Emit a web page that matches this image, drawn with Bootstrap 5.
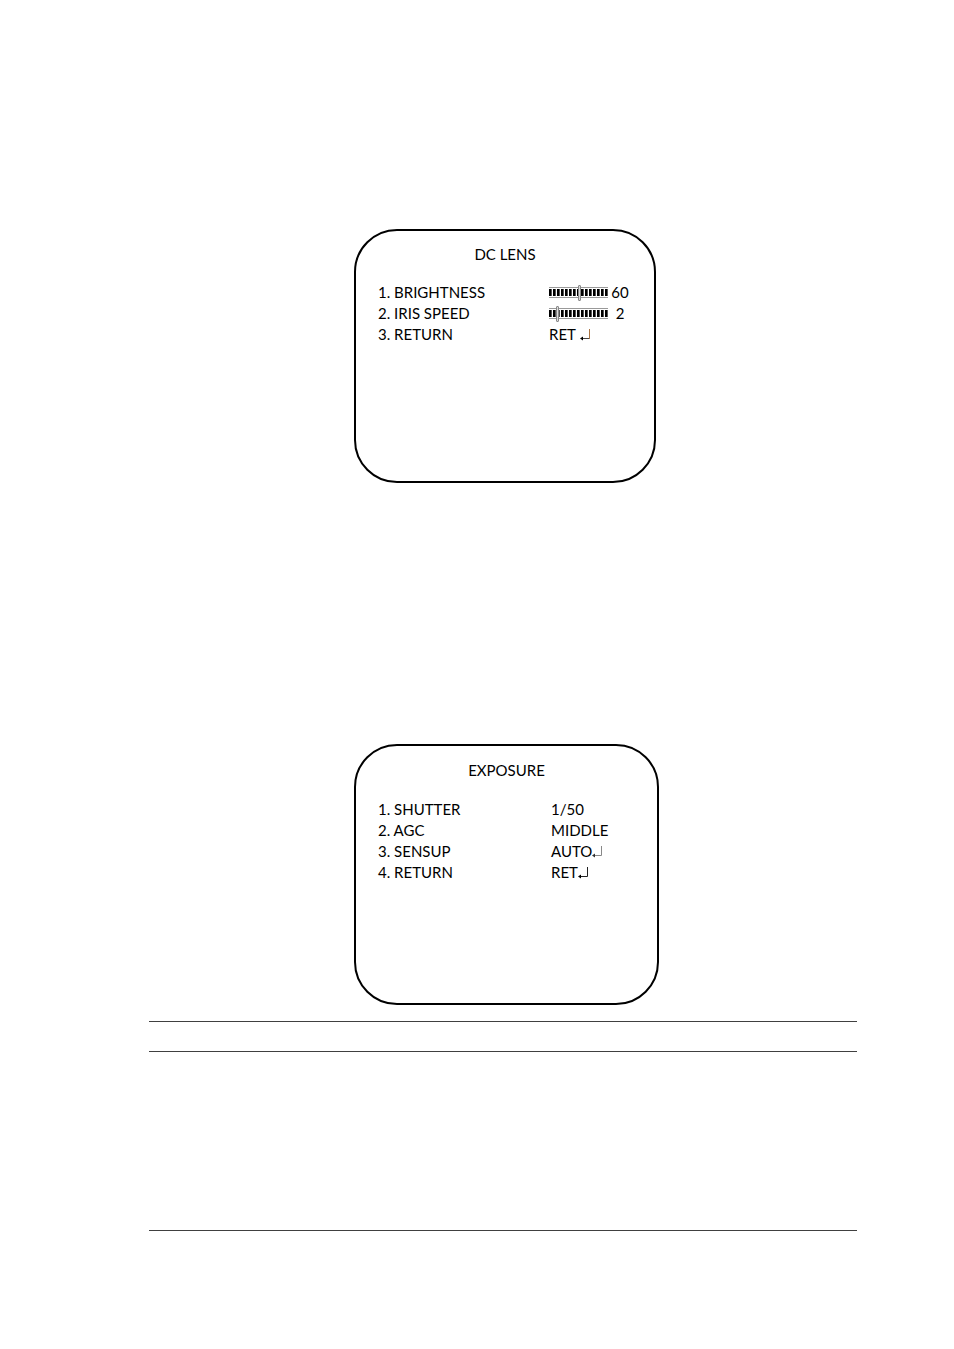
<!DOCTYPE html>
<html lang="en">
<head>
<meta charset="utf-8">
<meta name="viewport" content="width=device-width, initial-scale=1">
<title>DC Lens and Exposure menus</title>
<link href="https://cdn.jsdelivr.net/npm/bootstrap@5.3.0/dist/css/bootstrap.min.css" rel="stylesheet">
<style>
  body { background: #fff; color: #000; font-family: Lato, "Liberation Sans", sans-serif; font-size: 15px; line-height: 21px; }
  .manual { padding: 229px 97px 118px 149px; }
  .osd-row { padding-left: 205px; }
  .osd-second { margin-top: 261px; }
  .osd { border: 2px solid #000; border-radius: 43px; width: 302px; min-height: 254px; padding: 13px 22px; }
  .osd-large { width: 305px; min-height: 261px; padding-top: 14px; }
  .osd h2 { font-size: 15px; line-height: 21px; font-weight: 400; margin: 0 0 17px; }
  .osd-large h2 { margin-bottom: 18px; }
  .osd-name { width: 171px; flex: none; }
  .osd-large .osd-name { width: 173px; }
  .osd-button { background: none; border: 0; padding: 0; color: inherit; }
  .level { appearance: none; -webkit-appearance: none; width: 59px; height: 17px; margin: 0; flex: none;
    background:
      linear-gradient(#999, #999) 0 3px / 100% 1px no-repeat,
      linear-gradient(#999, #999) 0 13px / 100% 1px no-repeat,
      repeating-linear-gradient(90deg, #000 0 2px, #555 2px 3px, #fff 3px 4px) 0 5px / 59px 7px no-repeat; }
  .level::-webkit-slider-thumb { -webkit-appearance: none; width: 3px; height: 16px; border: 1px solid #888; border-radius: 1px; background: #ddd; }
  .level::-moz-range-thumb { width: 1px; height: 14px; border: 1px solid #888; border-radius: 1px; background: #ddd; }
  .level-value { width: 24px; }
  .ruled-head { height: 31px; border-top: 1px solid #404040; border-bottom: 1px solid #404040; }
  .ruled-body { height: 179px; border-bottom: 1px solid #404040; }
</style>
</head>
<body>
<main class="manual">
  <div class="osd-row">
    <section class="osd">
      <h2 class="text-center">DC LENS</h2>
      <div class="d-flex align-items-center"><label class="osd-name" for="brightness">1. BRIGHTNESS</label><input class="level" id="brightness" type="range" min="0" max="115" value="60"><output class="level-value text-center" for="brightness">60</output></div>
      <div class="d-flex align-items-center"><label class="osd-name" for="iris">2. IRIS SPEED</label><input class="level" id="iris" type="range" min="0" max="15" value="2"><output class="level-value text-center" for="iris">2</output></div>
      <div class="d-flex"><span class="osd-name">3. RETURN</span><button type="button" class="osd-button d-flex align-items-center gap-1">RET
        <svg width="12" height="12" viewBox="0 0 12 12" aria-hidden="true"><path d="M2 9.500H10" stroke="#444"/><path d="M9.500 0V10" stroke="#aa7443"/><path d="M0 9.500L3 7.500V11.500Z"/></svg></button></div>
    </section>
  </div>
  <div class="osd-row osd-second">
    <section class="osd osd-large">
      <h2 class="text-center">EXPOSURE</h2>
      <div class="d-flex"><span class="osd-name">1. SHUTTER</span><span>1/50</span></div>
      <div class="d-flex"><span class="osd-name">2. AGC</span><span>MIDDLE</span></div>
      <div class="d-flex"><span class="osd-name">3. SENSUP</span><button type="button" class="osd-button d-flex align-items-center">AUTO
        <svg width="12" height="12" viewBox="0 0 12 12" aria-hidden="true"><path d="M2 9.500H9.500V0" fill="none" stroke="#888"/><path d="M0 9.500L3 7.500V11.500Z" fill="#333"/></svg></button></div>
      <div class="d-flex"><span class="osd-name">4. RETURN</span><button type="button" class="osd-button d-flex align-items-center">RET
        <svg width="12" height="12" viewBox="0 0 12 12" aria-hidden="true"><path d="M2 9.500H9.500V0" fill="none" stroke="#222"/><path d="M0 9.500L3 7.500V11.500Z"/></svg></button></div>
    </section>
  </div>
  <div class="ruled mt-3">
    <div class="ruled-head"></div>
    <div class="ruled-body"></div>
  </div>
</main>
<script src="https://cdn.jsdelivr.net/npm/bootstrap@5.3.0/dist/js/bootstrap.bundle.min.js"></script>
</body>
</html>
